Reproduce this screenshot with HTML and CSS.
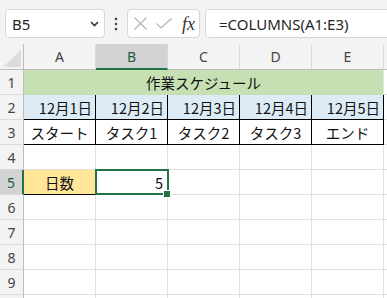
FILE: index.html
```html
<!DOCTYPE html>
<html lang="ja">
<head>
<meta charset="utf-8">
<link rel="stylesheet" href="styles.css">
</head>
<body>
<div class="toolbar">
  <div class="namebox"><span>B5</span>
    <svg class="chev" width="9" height="6" viewBox="0 0 9 6"><path d="M1 1 L4.5 4.5 L8 1" fill="none" stroke="#333" stroke-width="1.6"/></svg>
  </div>
  <div class="dots">
    <svg width="4" height="14" viewBox="0 0 4 14"><circle cx="2" cy="2" r="1.3" fill="#444"/><circle cx="2" cy="7" r="1.3" fill="#444"/><circle cx="2" cy="12" r="1.3" fill="#444"/></svg>
  </div>
  <div class="fxbox">
    <svg width="13" height="13" viewBox="0 0 13 13"><path d="M0.5 0.5 L12.5 12.5 M12.5 0.5 L0.5 12.5" stroke="#b4b4b4" stroke-width="1.2" fill="none"/></svg>
    <svg class="check" width="16" height="11" viewBox="0 0 16 11"><path d="M0.5 5.5 L5 10 L15.5 0.5" stroke="#b4b4b4" stroke-width="1.2" fill="none"/></svg>
    <span class="fx">fx</span>
  </div>
  <div class="formula">=COLUMNS(A1:E3)</div>
</div>
<div class="sheet">
  <div class="corner"><svg width="24" height="26" viewBox="0 0 24 26"><polygon points="3,23 21,23 21,6" fill="#dcdcdc"/></svg></div>
  <div class="col-h">A</div>
  <div class="col-h sel">B</div>
  <div class="col-h">C</div>
  <div class="col-h">D</div>
  <div class="col-h">E</div>
  <div class="col-h"></div>

  <div class="row-h">1</div>
  <div class="cell title">作業スケジュール</div>
  <div class="cell"></div>

  <div class="row-h">2</div>
  <div class="cell date">12月1日</div>
  <div class="cell date">12月2日</div>
  <div class="cell date">12月3日</div>
  <div class="cell date">12月4日</div>
  <div class="cell date">12月5日</div>
  <div class="cell"></div>

  <div class="row-h">3</div>
  <div class="cell task">スタート</div>
  <div class="cell task">タスク1</div>
  <div class="cell task">タスク2</div>
  <div class="cell task">タスク3</div>
  <div class="cell task">エンド</div>
  <div class="cell"></div>

  <div class="row-h">4</div>
  <div class="cell"></div><div class="cell"></div><div class="cell"></div><div class="cell"></div><div class="cell"></div><div class="cell"></div>

  <div class="row-h sel">5</div>
  <div class="cell label">日数</div>
  <div class="cell active">5</div>
  <div class="cell"></div><div class="cell"></div><div class="cell"></div><div class="cell"></div>

  <div class="row-h">6</div>
  <div class="cell"></div><div class="cell"></div><div class="cell"></div><div class="cell"></div><div class="cell"></div><div class="cell"></div>
  <div class="row-h">7</div>
  <div class="cell"></div><div class="cell"></div><div class="cell"></div><div class="cell"></div><div class="cell"></div><div class="cell"></div>
  <div class="row-h">8</div>
  <div class="cell"></div><div class="cell"></div><div class="cell"></div><div class="cell"></div><div class="cell"></div><div class="cell"></div>
  <div class="row-h">9</div>
  <div class="cell"></div><div class="cell"></div><div class="cell"></div><div class="cell"></div><div class="cell"></div><div class="cell"></div>
  <div class="row-h"></div>
  <div class="cell"></div><div class="cell"></div><div class="cell"></div><div class="cell"></div><div class="cell"></div><div class="cell"></div>
</div>
</body>
</html>
```
FILE: styles.css
```css
* { box-sizing: border-box; }
html, body { margin: 0; padding: 0; }
body {
  width: 387px;
  height: 298px;
  overflow: hidden;
  background: #fff;
  font-family: "Noto Sans", "Liberation Sans", sans-serif;
}
.toolbar {
  display: flex;
  align-items: flex-start;
  height: 44px;
  padding: 9px 0 0 5px;
  background: #f3f3f3;
  overflow: hidden;
}
.namebox {
  flex: 0 0 100px;
  height: 29px;
  background: #fff;
  border: 1px solid #d6d6d6;
  border-radius: 4px;
  display: flex;
  align-items: center;
  justify-content: space-between;
  padding: 0 5px 0 6px;
  font-size: 15px;
  color: #262626;
}
.dots {
  flex: 0 0 22px;
  height: 29px;
  display: flex;
  align-items: center;
  justify-content: center;
}
.fxbox {
  flex: 0 0 73px;
  height: 29px;
  background: #fff;
  border: 1px solid #d6d6d6;
  border-radius: 4px;
  display: flex;
  align-items: center;
  padding-left: 6px;
}
.check { margin-left: 9px; }
.fx {
  margin-left: 10px;
  font-family: "Liberation Serif", "DejaVu Serif", serif;
  font-style: italic;
  font-size: 18px;
  color: #333;
  line-height: 1;
}
.formula {
  flex: 1;
  margin-left: 5px;
  margin-right: -10px;
  height: 29px;
  background: #fff;
  border: 1px solid #d6d6d6;
  border-radius: 4px;
  display: flex;
  align-items: center;
  padding-left: 13px;
  font-size: 15px;
  color: #262626;
}
.sheet {
  display: grid;
  grid-template-columns: 24px repeat(5, 72px) 1fr;
  grid-template-rows: 26px repeat(10, 25px);
}
.corner {
  background: #f3f3f3;
  border-right: 1px solid #bdbdbd;
  border-bottom: 1px solid #bdbdbd;
}
.corner svg { display: block; }
.col-h {
  background: #f3f3f3;
  border-right: 1px solid #dadada;
  border-bottom: 1px solid #bdbdbd;
  display: flex;
  align-items: center;
  justify-content: center;
  font-size: 14px;
  color: #444;
}
.col-h.sel {
  background: #d3d3d3;
  border-bottom: 2px solid #217346;
  color: #1d5d3a;
}
.row-h {
  background: #f3f3f3;
  border-right: 1px solid #bdbdbd;
  border-bottom: 1px solid #dadada;
  display: flex;
  align-items: center;
  justify-content: center;
  font-size: 14px;
  color: #444;
}
.row-h.sel {
  background: #d3d3d3;
  border-right: 2px solid #217346;
  color: #1d5d3a;
}
.cell {
  border-right: 1px solid #e1e1e1;
  border-bottom: 1px solid #e1e1e1;
  display: flex;
  align-items: center;
  justify-content: center;
  padding: 0 3px;
  font-family: "Noto Sans CJK JP", "Noto Sans", sans-serif;
  font-size: 14.5px;
  color: #111;
  white-space: nowrap;
}
.title {
  grid-column: span 5;
  background: #c6e0b4;
  border-bottom-color: #c6e0b4;
}
.date {
  background: #ddebf7;
  justify-content: flex-end;
  border-right-color: #000;
  border-bottom-color: #000;
}
.task {
  border-right-color: #000;
  border-bottom-color: #000;
}
.label {
  background: #ffe699;
  border-bottom-color: #000;
}
.active {
  position: relative;
  z-index: 2;
  justify-content: flex-end;
  padding-right: 4px;
}
.active::before {
  content: "";
  position: absolute;
  top: -1px;
  left: -1px;
  right: -2px;
  bottom: -1px;
  border: 2px solid #217346;
}
.active::after {
  content: "";
  position: absolute;
  right: -3px;
  bottom: -3px;
  width: 6px;
  height: 6px;
  background: #217346;
  box-shadow: 0 0 0 1px #fff;
}
```
